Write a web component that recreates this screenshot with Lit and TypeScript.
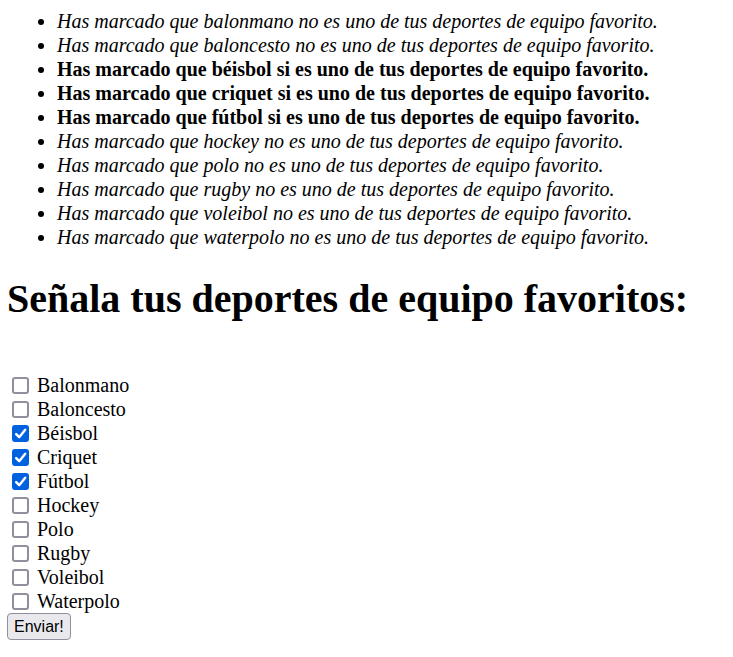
import { LitElement, html, css } from "lit";
import { customElement, state } from "lit/decorators.js";

interface Deporte {
  nombre: string;
  marcado: boolean;
}

@customElement("app-root")
export class AppRoot extends LitElement {
  static styles = css`
    :host {
      display: block;
      padding: 9px 7px 16px;
      background: #fff;
      color: #000;
      font-family: "Liberation Serif", "Times New Roman", serif;
      font-size: 20px;
      line-height: 24px;
    }
    .resultados {
      margin: 0;
      padding-left: 50px;
    }
    .si {
      font-weight: bold;
    }
    .no {
      font-style: italic;
    }
    .titulo {
      margin: 26px 0 50px;
      font-size: 40px;
      line-height: 48px;
      font-weight: bold;
    }
    .opciones {
      display: flex;
      flex-direction: column;
      align-items: flex-start;
    }
    .opcion {
      display: flex;
      align-items: center;
      gap: 8px;
      padding-left: 5px;
    }
    .casilla {
      appearance: none;
      box-sizing: border-box;
      width: 17px;
      height: 17px;
      margin: 0;
      border: 2px solid #8f8f9d;
      border-radius: 3px;
      background: #fff;
    }
    .casilla:checked {
      border-color: #0061e0;
      background: #0061e0;
    }
    .marca {
      display: grid;
    }
    .marca > * {
      grid-area: 1 / 1;
    }
    .visto {
      width: 17px;
      height: 17px;
      pointer-events: none;
    }
    .enviar {
      box-sizing: border-box;
      height: 27px;
      padding: 0 6px;
      border: 1px solid #8f8f9d;
      border-radius: 4px;
      background: #e9e9ed;
      color: #000;
      font-family: "Liberation Sans", Arial, sans-serif;
      font-size: 16px;
      line-height: 24px;
    }
  `;

  @state() private deportes: Deporte[] = [
    { nombre: "Balonmano", marcado: false },
    { nombre: "Baloncesto", marcado: false },
    { nombre: "Béisbol", marcado: true },
    { nombre: "Criquet", marcado: true },
    { nombre: "Fútbol", marcado: true },
    { nombre: "Hockey", marcado: false },
    { nombre: "Polo", marcado: false },
    { nombre: "Rugby", marcado: false },
    { nombre: "Voleibol", marcado: false },
    { nombre: "Waterpolo", marcado: false },
  ];

  @state() private enviados: Deporte[] = this.deportes;

  private cambiar(indice: number) {
    this.deportes = this.deportes.map((d, i) =>
      i === indice ? { ...d, marcado: !d.marcado } : d
    );
  }

  private enviar(e: Event) {
    e.preventDefault();
    this.enviados = this.deportes;
  }

  render() {
    return html`
      <ul class="resultados">
        ${this.enviados.map(
          (d) => html`<li><span class=${d.marcado ? "si" : "no"}>Has marcado que ${d.nombre.toLowerCase()} ${d.marcado ? "si" : "no"} es uno de tus deportes de equipo favorito.</span></li>`
        )}
      </ul>
      <h1 class="titulo">Señala tus deportes de equipo favoritos:</h1>
      <form class="opciones" @submit=${this.enviar}>
        ${this.deportes.map(
          (d, i) => html`
            <label class="opcion">
              <span class="marca">
                <input class="casilla" type="checkbox" .checked=${d.marcado} @change=${() => this.cambiar(i)} />
                ${d.marcado
                  ? html`<svg class="visto" viewBox="0 0 17 17" aria-hidden="true">
                      <path d="M4.2 9.2l3 3 6-7.4" fill="none" stroke="#fff" stroke-width="2.5" stroke-linecap="round" stroke-linejoin="round" />
                    </svg>`
                  : ""}
              </span>
              <span>${d.nombre}</span>
            </label>
          `
        )}
        <button class="enviar" type="submit">Enviar!</button>
      </form>
    `;
  }
}
